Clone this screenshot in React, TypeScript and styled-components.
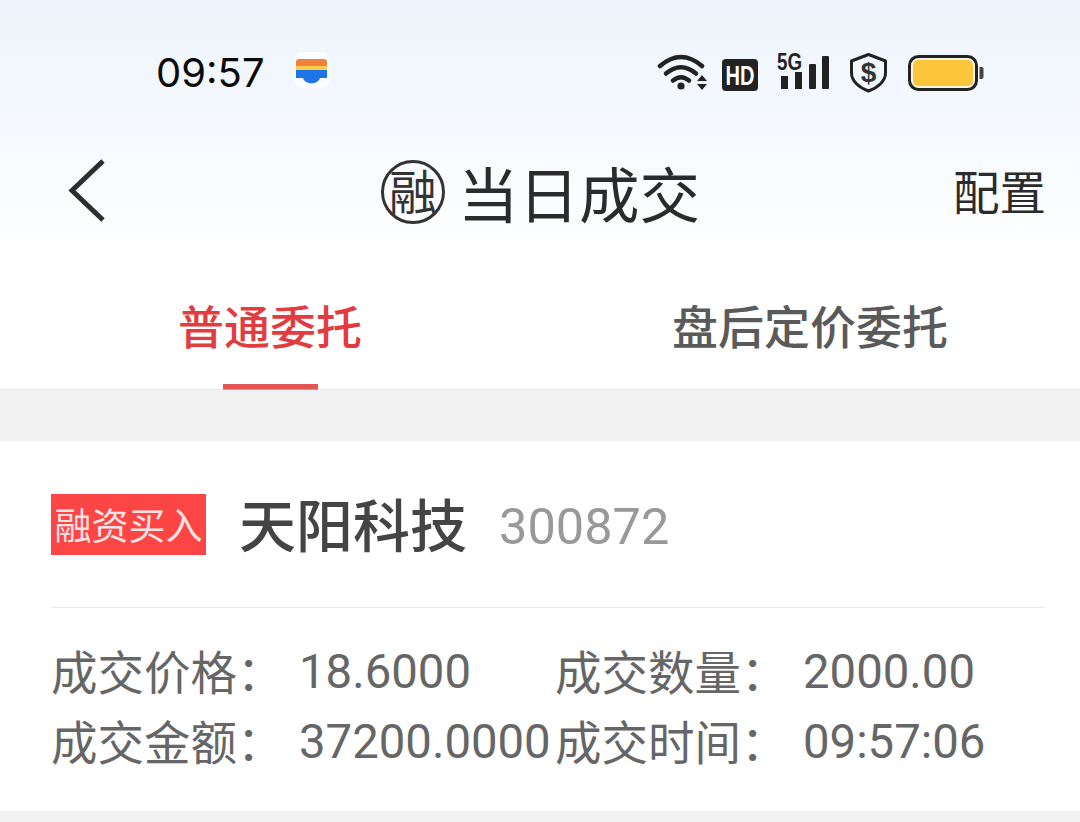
import React from "react";
import styled, { createGlobalStyle } from "styled-components";

const Global = createGlobalStyle`
  html, body { margin: 0; padding: 0; background: #f2f2f2; }
  body { width: 1080px; height: 822px; overflow: hidden; font-family: "Noto Sans CJK SC", sans-serif; }
`;
const Page = styled.div`
  width: 1080px;
  height: 822px;
  background: #f2f2f2;
  display: flex;
  flex-direction: column;
  overflow: hidden;
`;
const Top = styled.div`
  height: 260px;
  background: linear-gradient(180deg, #eff4fc 0%, #f4f8fe 42%, #ffffff 100%);
  display: flex;
  flex-direction: column;
`;
const StatusBar = styled.div`
  height: 135px;
  padding: 0 93px 0 156px;
  box-sizing: border-box;
  display: flex;
  align-items: flex-start;
`;
const Time = styled.div`
  font: 400 40px/40px Inter, "Liberation Sans", sans-serif;
  color: #0a0a0a;
  margin-top: 53px;
`;
const AppIcon = styled.svg`
  margin: 52px 0 0 29px;
`;
const StatusIcons = styled.div`
  margin-left: auto;
  margin-top: 50px;
  height: 46px;
  display: flex;
  align-items: center;
`;
const Header = styled.div`
  height: 125px;
  position: relative;
  display: flex;
  align-items: center;
  justify-content: center;
  padding-bottom: 12px;
  box-sizing: border-box;
`;
const Back = styled.svg`
  position: absolute;
  left: 66px;
  top: 22px;
`;
const TitleWrap = styled.div`
  display: flex;
  align-items: center;
  gap: 13px;
  margin-left: 1px;
`;
const Seal = styled.div`
  width: 64px;
  height: 64px;
  border: 3px solid #333;
  border-radius: 50%;
  box-sizing: border-box;
  display: flex;
  align-items: center;
  justify-content: center;
  padding-bottom: 5px;
  font: 400 48px/1 "Noto Sans CJK SC", sans-serif;
  color: #333;
`;
const Title = styled.div`
  font: 400 60.5px/70px "Noto Sans CJK SC", sans-serif;
  color: #2b2b2b;
`;
const Config = styled.div`
  position: absolute;
  right: 34px;
  top: 25px;
  font: 400 46.5px/60px "Noto Sans CJK SC", sans-serif;
  color: #2b2b2b;
`;
const Tabs = styled.div`
  height: 130px;
  background: #fff;
  border-bottom: 1px solid #e9e9e9;
  box-sizing: border-box;
  display: flex;
`;
const Tab = styled.div<{ $active?: boolean }>`
  position: relative;
  flex: 1;
  text-align: center;
  font: 500 46px/129px "Noto Sans CJK SC", sans-serif;
  color: ${(p) => (p.$active ? "#e33c40" : "#5a5a5a")};
  ${(p) =>
    p.$active &&
    `&::after {
      content: "";
      position: absolute;
      left: 50%;
      bottom: -1px;
      width: 95px;
      margin-left: -47.5px;
      height: 6px;
      background: linear-gradient(#e25554 0 4.5px, #f7dcdc 4.5px 5.2px, #e88a8a 5.2px);
    }`}
`;
const Gap = styled.div`
  height: 51px;
  background: #f2f2f2;
`;
const Card = styled.div`
  height: 370px;
  background: #fff;
  padding: 0 35px 0 51px;
  box-sizing: border-box;
`;
const CardHead = styled.div`
  height: 167px;
  border-bottom: 1px solid #e9e9e9;
  display: flex;
  align-items: center;
  box-sizing: border-box;
`;
const Tag = styled.div`
  width: 155px;
  height: 61px;
  background: #fc4545;
  color: #fbe3e3;
  font: 400 37px/61px "Noto Sans CJK SC", sans-serif;
  text-align: center;
  margin-top: 1px;
`;
const Name = styled.div`
  margin-left: 33px;
  margin-top: -4px;
  font: 500 57px/70px "Noto Sans CJK SC", sans-serif;
  color: #444;
`;
const Code = styled.div`
  margin-left: 32px;
  margin-top: 6px;
  font: 400 50.5px/70px Roboto, sans-serif;
  color: #999;
`;
const Grid = styled.div`
  display: grid;
  grid-template-columns: 504px 1fr;
  grid-auto-rows: 70px;
  padding-top: 27px;
`;
const Cell = styled.div`
  display: flex;
  align-items: center;
  color: #666;
`;
const Label = styled.div`
  width: 248px;
  flex-shrink: 0;
  font: 400 46.5px/70px "Noto Sans CJK SC", sans-serif;
  white-space: nowrap;
`;
const Value = styled.div`
  margin-top: 3px;
  font: 400 47.3px/70px Roboto, sans-serif;
  white-space: nowrap;
`;

const rows: [string, string][] = [
  ["成交价格：", "18.6000"],
  ["成交数量：", "2000.00"],
  ["成交金额：", "37200.0000"],
  ["成交时间：", "09:57:06"],
];

const ink = "#222";

export default function App() {
  return (
    <Page>
      <Global />
      <Top>
        <StatusBar>
          <Time>09:57</Time>
          <AppIcon width="36" height="36" viewBox="0 0 36 36">
            <rect width="36" height="36" rx="8" fill="#fbfcfe" />
            <path d="M2 10a3 3 0 0 1 3-3h25a3 3 0 0 1 3 3v5H2z" fill="#f0813a" />
            <rect x="2" y="14" width="31" height="4" fill="#fbcb4c" />
            <path d="M2 18h31v8h-7c-2 7-15 7-17 0H2z" fill="#1f74e6" />
          </AppIcon>
          <StatusIcons>
            <svg width="60" height="46" viewBox="655 50 60 46">
              <g fill="none" stroke={ink} strokeWidth="4.500" strokeLinecap="round">
                <path d="M660 66Q681 48 702 66" />
                <path d="M666 73.500Q681 61 696 73.500" />
                <path d="M673 80.500Q681 74 689 80.500" />
              </g>
              <circle cx="681" cy="86" r="3.600" fill={ink} />
              <path d="M702 75l5 6h-10zM697 84h10l-5 6z" fill={ink} />
            </svg>
            <svg width="55" height="46" viewBox="715 50 55 46">
              <rect x="722" y="59" width="36" height="32" rx="4" fill={ink} />
              <text x="725.500" y="84.500" fill="#fff" fontFamily="Liberation Sans" fontWeight="700" fontSize="27" textLength="29" lengthAdjust="spacingAndGlyphs">HD</text>
            </svg>
            <svg width="70" height="46" viewBox="770 50 70 46">
              <text x="777" y="69.500" fill={ink} fontFamily="Liberation Sans" fontWeight="700" fontSize="23" textLength="25" lengthAdjust="spacingAndGlyphs">5G</text>
              <rect x="781" y="76" width="7" height="13" fill={ink} />
              <rect x="795" y="72" width="7" height="17" fill={ink} />
              <rect x="809" y="64" width="7" height="25" rx="1" fill={ink} />
              <rect x="822" y="56" width="7" height="33" rx="1" fill={ink} />
            </svg>
            <svg width="57" height="46" viewBox="840 50 57 46">
              <path d="M868.500 54.500L885.500 61V73C885.500 81 878 87.500 868.500 91C859 87.500 851.500 81 851.500 73V61Z" fill="none" stroke={ink} strokeWidth="3" strokeLinejoin="round" />
              <text x="868.500" y="82" textAnchor="middle" fill="#333" fontFamily="Liberation Sans" fontWeight="700" fontSize="28">$</text>
            </svg>
            <svg width="90" height="46" viewBox="897 50 90 46">
              <rect x="909.500" y="56.500" width="67" height="33" rx="9" fill="#fdf6e3" stroke={ink} strokeWidth="3" />
              <rect x="913" y="60" width="60" height="26" rx="5" fill="#fbc63c" />
              <path d="M979.500 67h2a2 2 0 0 1 2 2v8a2 2 0 0 1-2 2h-2z" fill="#444" />
            </svg>
          </StatusIcons>
        </StatusBar>
        <Header>
          <Back width="44" height="70" viewBox="0 0 44 70">
            <path d="M37 4 L6 33.500 L37 63" fill="none" stroke="#2e2e2e" strokeWidth="5" />
          </Back>
          <TitleWrap>
            <Seal>融</Seal>
            <Title>当日成交</Title>
          </TitleWrap>
          <Config>配置</Config>
        </Header>
      </Top>
      <Tabs>
        <Tab $active>普通委托</Tab>
        <Tab>盘后定价委托</Tab>
      </Tabs>
      <Gap />
      <Card>
        <CardHead>
          <Tag>融资买入</Tag>
          <Name>天阳科技</Name>
          <Code>300872</Code>
        </CardHead>
        <Grid>
          {rows.map(([l, v]) => (
            <Cell key={l}>
              <Label>{l}</Label>
              <Value>{v}</Value>
            </Cell>
          ))}
        </Grid>
      </Card>
    </Page>
  );
}
